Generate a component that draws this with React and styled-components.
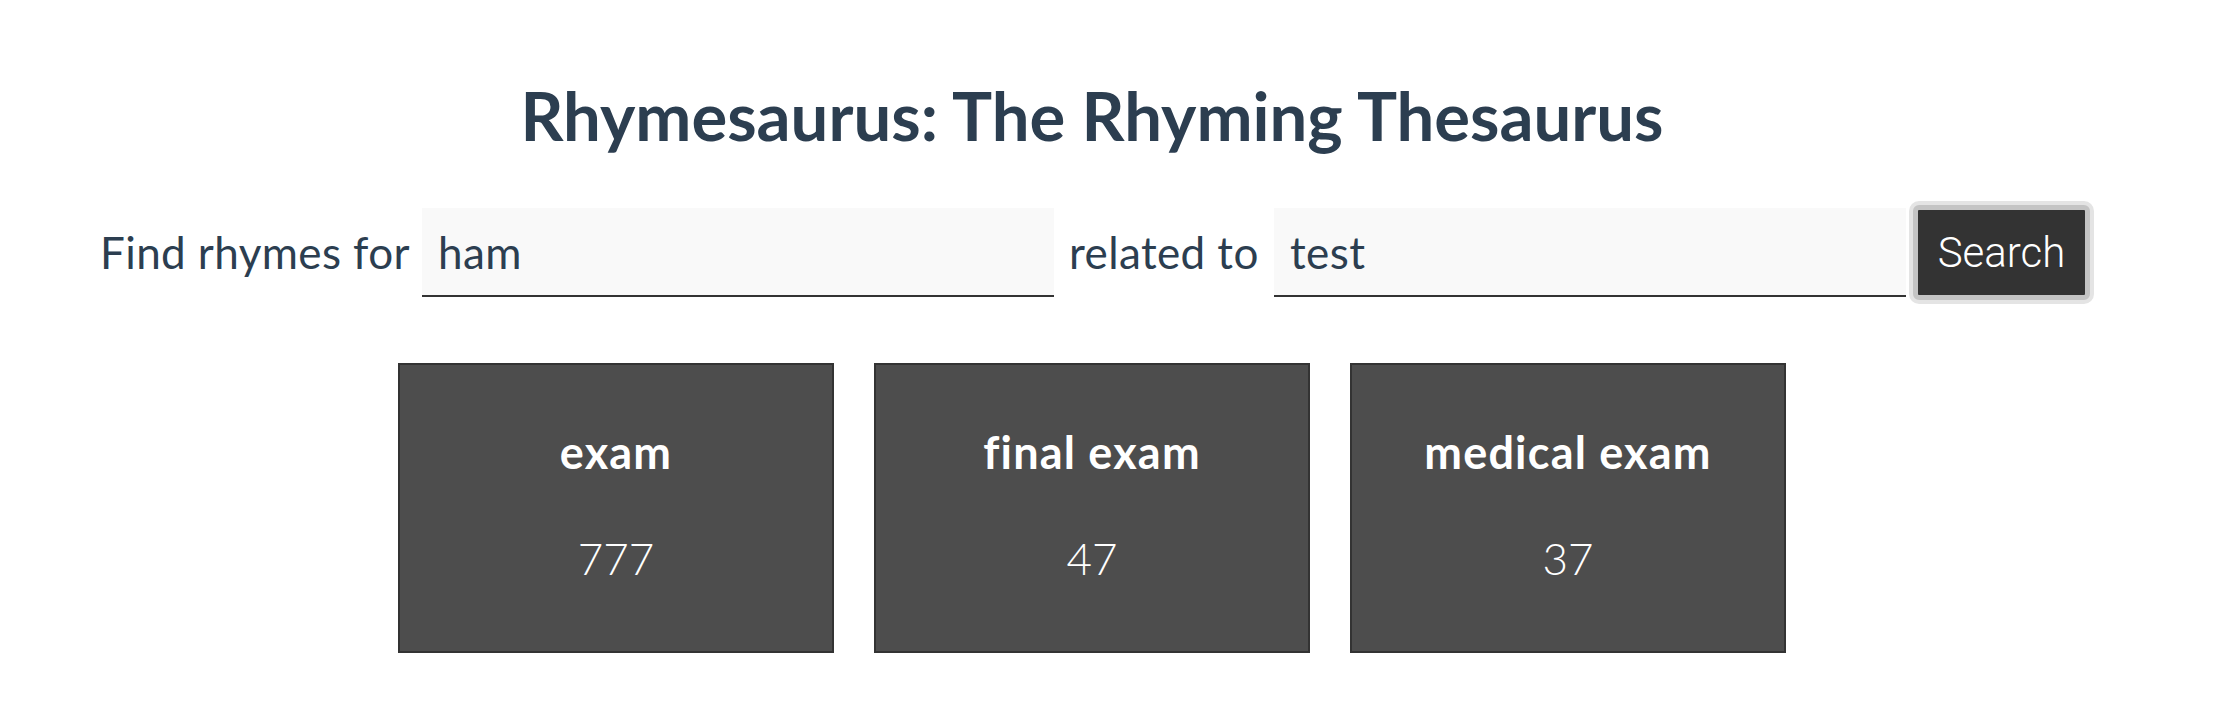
import React from "react";
import styled, { createGlobalStyle } from "styled-components";

const GlobalStyle = createGlobalStyle`
  html, body {
    margin: 0;
    padding: 0;
    background: #ffffff;
  }
  body {
    font-family: Lato, "Noto Sans", sans-serif;
    color: #2c3e50;
  }
  * { box-sizing: border-box; }
`;

const Page = styled.main`
  display: flex;
  flex-direction: column;
  align-items: center;
  padding: 75px 30px 0 0;
`;

const Title = styled.h1`
  margin: 0;
  font-family: Lato, "Noto Sans", sans-serif;
  font-weight: 700;
  font-size: 67px;
  line-height: 1.2;
  color: #2c3e50;
`;

const SearchForm = styled.form`
  margin: 50px 0 0 6px;
  display: flex;
  align-items: center;
`;

const Label = styled.span`
  flex: none;
  width: ${(p) => p.$w}px;
  margin-right: ${(p) => p.$after}px;
  font-family: Lato, "Noto Sans", sans-serif;
  font-weight: 400;
  font-size: 44px;
  letter-spacing: 0.4px;
  line-height: 1.2;
  color: #2c3e50;
  white-space: nowrap;
`;

const TextInput = styled.input`
  flex: none;
  width: 632px;
  height: 89px;
  margin-right: ${(p) => p.$after}px;
  padding: 0 16px;
  border: none;
  border-bottom: 2px solid #333333;
  border-radius: 0;
  background: #f9f9f9;
  font-family: Lato, "Noto Sans", sans-serif;
  font-weight: 400;
  font-size: 44px;
  letter-spacing: 0.4px;
  color: #2c3e50;
  outline: none;
`;

const SearchButton = styled.button`
  flex: none;
  width: 177px;
  height: 95px;
  padding: 0;
  background: #333333;
  color: #ffffff;
  border: 5px solid #c4c4c4;
  border-radius: 6px;
  box-shadow: 0 0 0 4px #e4e4e4;
  font-family: Roboto, "Liberation Sans", sans-serif;
  font-weight: 300;
  font-size: 42px;
  cursor: pointer;
`;

const Results = styled.section`
  margin-top: 63px;
  display: flex;
  gap: 40px;
`;

const Card = styled.article`
  width: 436px;
  height: 290px;
  padding-top: 60px;
  display: flex;
  flex-direction: column;
  align-items: center;
  gap: 53px;
  background: #4d4d4d;
  border: 2px solid #333333;
  color: #ffffff;
`;

const Word = styled.div`
  font-family: Lato, "Noto Sans", sans-serif;
  font-weight: 700;
  font-size: 45px;
  letter-spacing: 1.2px;
  line-height: 1.2;
`;

const Score = styled.div`
  font-family: Lato, "Noto Sans", sans-serif;
  font-weight: 300;
  font-size: 44px;
  line-height: 1.2;
`;

const results = [
  { word: "exam", score: 777 },
  { word: "final exam", score: 47 },
  { word: "medical exam", score: 37 },
];

export default function App() {
  return (
    <>
      <GlobalStyle />
      <Page>
        <Title>Rhymesaurus: The Rhyming Thesaurus</Title>
        <SearchForm onSubmit={(e) => e.preventDefault()}>
          <Label $w={310} $after={12}>Find rhymes for</Label>
          <TextInput $after={15} defaultValue="ham" />
          <Label $w={189} $after={16}>related to</Label>
          <TextInput $after={7} defaultValue="test" />
          <SearchButton type="submit">Search</SearchButton>
        </SearchForm>
        <Results>
          {results.map((r) => (
            <Card key={r.word}>
              <Word>{r.word}</Word>
              <Score>{r.score}</Score>
            </Card>
          ))}
        </Results>
      </Page>
    </>
  );
}
